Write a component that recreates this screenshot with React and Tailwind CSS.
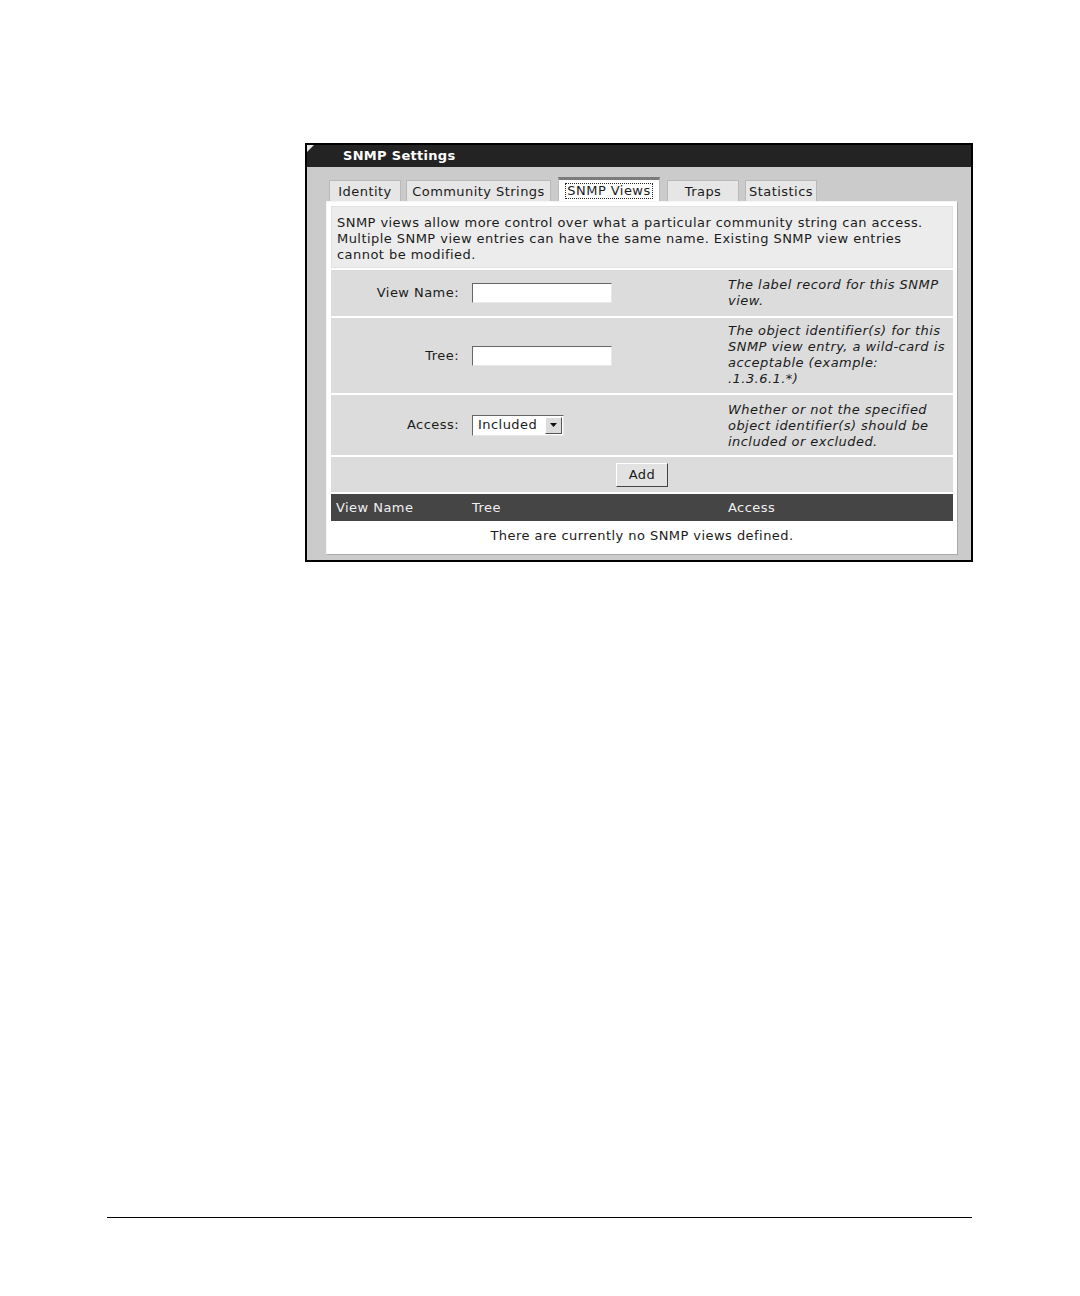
import React from 'react';

const font = "font-['DejaVu_Sans',Verdana,sans-serif]";

const tabs = [
  { label: 'Identity', w: 'w-[72px]', m: 'mr-[5px]' },
  { label: 'Community Strings', w: 'w-[145px]', m: '' },
  { label: 'SNMP Views', w: 'w-[102px]', m: 'mx-[7px]', active: true },
  { label: 'Traps', w: 'w-[72px]', m: 'mr-[6px]' },
  { label: 'Statistics', w: 'w-[72px]', m: '' },
];

const TextBox = () => (
  <div className="w-[140px] h-[20px] bg-white border border-t-[#666] border-l-[#666] border-r-[#e8e8e8] border-b-[#e8e8e8]" />
);

const FormRow = ({ label, children, desc, h, pt }) => (
  <div className={`grid grid-cols-[141px_256px_1fr] bg-[#dcdcdc] ${h}`}>
    <div className="flex items-center justify-end pr-[13px]">{label}</div>
    <div className="flex items-center">{children}</div>
    <div className={`italic leading-[16px] pr-[4px] ${pt}`}>
      {desc.map((line) => (
        <div key={line} className="whitespace-nowrap">{line}</div>
      ))}
    </div>
  </div>
);

const App = () => {
  return (
    <div className={`w-[1080px] h-[1296px] bg-white flex flex-col ${font} text-[13px] tracking-[0.45px] text-[#1b1b1b]`}>
      {/* settings frame */}
      <div className="ml-[305px] mt-[143px] w-[668px] border-2 border-black bg-[#cbcbcb]">
        <div className="relative h-[22px] bg-[#232323] flex items-center pl-[36px]">
          <div className="absolute left-0 top-0 w-0 h-0 border-t-[7px] border-t-[#e8e8e8] border-r-[7px] border-r-transparent" />
          <span className="text-white font-bold text-[13px] tracking-[0.3px]">SNMP Settings</span>
        </div>

        <div className="pt-[10px] pb-[5px] pl-[19px]">
          {/* tabs */}
          <div className="flex items-end h-[24px] pl-[3px]">
            {tabs.map((t) => (
              <div
                key={t.label}
                className={
                  t.active
                    ? `${t.w} ${t.m} h-[24px] bg-white border-t-[3px] border-t-[#7b7b7b] border-x border-x-[#bdbdbd] flex items-center justify-center`
                    : `${t.w} ${t.m} h-[21px] bg-[#e6e6e6] border border-b-0 border-[#b9b9b9] flex items-center justify-center`
                }
              >
                {t.active ? (
                  <span className="outline outline-1 outline-dotted outline-[#222] px-[1px] leading-[14px] mt-[1px]">{t.label}</span>
                ) : (
                  <span className="leading-[16px] mt-[2px]">{t.label}</span>
                )}
              </div>
            ))}
          </div>

          {/* panel */}
          <div className="w-[632px] bg-white border border-t-[#f4f4f4] border-l-[#f4f4f4] border-r-[#a9a9a9] border-b-[#a9a9a9] p-[4px] flex flex-col gap-[2px]">
            <div className="bg-[#ececec] h-[62px] px-[5px] pt-[8px] leading-[16px] border border-[#e2e2e2]">
              <div className="whitespace-nowrap">SNMP views allow more control over what a particular community string can access.</div>
              <div className="whitespace-nowrap">Multiple SNMP view entries can have the same name. Existing SNMP view entries</div>
              <div className="whitespace-nowrap">cannot be modified.</div>
            </div>

            <FormRow label="View Name:" h="h-[46px]" pt="pt-[7px]" desc={['The label record for this SNMP', 'view.']}>
              <TextBox />
            </FormRow>

            <FormRow
              label="Tree:"
              h="h-[75px]"
              pt="pt-[5px]"
              desc={['The object identifier(s) for this', 'SNMP view entry, a wild-card is', 'acceptable (example:', '.1.3.6.1.*)']}
            >
              <TextBox />
            </FormRow>

            <FormRow
              label="Access:"
              h="h-[60px]"
              pt="pt-[7px]"
              desc={['Whether or not the specified', 'object identifier(s) should be', 'included or excluded.']}
            >
              <div className="h-[21px] w-[92px] bg-white flex items-center border border-t-[#666] border-l-[#666] border-r-[#e8e8e8] border-b-[#e8e8e8]">
                <span className="flex-1 pl-[5px] leading-[16px]">Included</span>
                <div className="w-[17px] h-[17px] mr-[1px] bg-[#dcdcdc] border border-t-white border-l-white border-r-[#555] border-b-[#555] flex items-center justify-center">
                  <svg width="7" height="4" viewBox="0 0 7 4">
                    <path d="M0 0h7L3.5 4z" fill="#111" />
                  </svg>
                </div>
              </div>
            </FormRow>

            <div className="bg-[#dcdcdc] h-[35px] flex items-center justify-center">
              <button className="w-[52px] h-[24px] bg-[#e2e2e2] border border-t-white border-l-white border-r-[#444] border-b-[#444] leading-[16px] text-[13px] tracking-[0.45px]">
                Add
              </button>
            </div>

            <div>
              <div className="grid grid-cols-[141px_256px_1fr] bg-[#454545] text-[#f0f0f0] h-[27px] items-center">
                <div className="pl-[5px]">View Name</div>
                <div>Tree</div>
                <div>Access</div>
              </div>
              <div className="h-[29px] flex items-center justify-center bg-white">
                There are currently no SNMP views defined.
              </div>
            </div>
          </div>
        </div>
      </div>

      {/* page footer rule */}
      <div className="mt-auto mb-[78px] ml-[107px] w-[865px] border-t border-black" />
    </div>
  );
};

export default App;
